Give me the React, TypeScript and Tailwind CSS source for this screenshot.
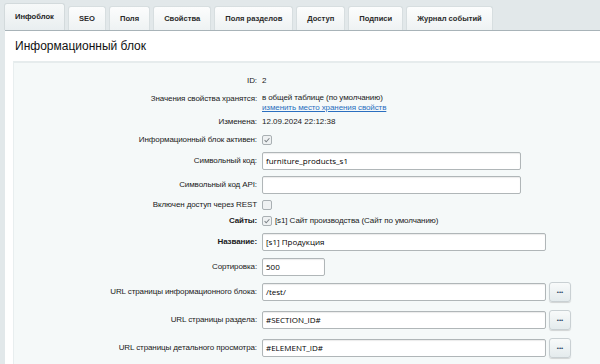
import type { ReactNode } from 'react'

const tabs = ['Инфоблок', 'SEO', 'Поля', 'Свойства', 'Поля разделов', 'Доступ', 'Подписи', 'Журнал событий']

function Label({ children, bold }: { children: ReactNode; bold?: boolean }) {
  return (
    <div className={`w-[248px] shrink-0 pr-[5px] text-right text-[8px] tracking-[-0.1px] text-[#1a1a1a] ${bold ? 'font-bold' : ''}`}>
      {children}
    </div>
  )
}

function TextInput({ value, w }: { value: string; w: string }) {
  return (
    <div className={`${w} h-[18px] flex items-center rounded-[2px] border border-[#b0b6b8] bg-white px-[3px] shadow-[inset_0_1px_1px_rgba(0,0,0,0.08)] font-['Open_Sans',sans-serif] text-[8px] text-black`}>
      {value}
    </div>
  )
}

function Check({ checked }: { checked?: boolean }) {
  return (
    <span className="inline-flex h-[10px] w-[10px] shrink-0 items-center justify-center rounded-[2px] border border-[#a9b0b3] bg-[#eef1f2]">
      {checked && (
        <svg viewBox="0 0 10 10" className="h-[8px] w-[8px]">
          <path d="M2 5.2 L4 7.2 L8 2.8" fill="none" stroke="#7b8185" strokeWidth="1.3" />
        </svg>
      )}
    </span>
  )
}

function DotsButton() {
  return (
    <div className="ml-[3px] flex h-[20px] w-[22px] items-center justify-center rounded-[3px] border border-[#c9d0d3] bg-gradient-to-b from-[#f8fafa] to-[#e4ebed] shadow-[0_1px_1px_rgba(0,0,0,0.15)] text-[6px] font-bold leading-none text-[#2c4a66]">
      •••
    </div>
  )
}

export default function App() {
  return (
    <div className="h-[364px] w-[600px] overflow-hidden bg-[#e2e8ea] font-['Liberation_Sans',Arial,sans-serif]">
      <div className="flex h-[30px] items-end gap-[3px] pl-[4px]">
        {tabs.map((t, i) => (
          <div
            key={t}
            className={
              i === 0
                ? 'flex h-[27px] items-center rounded-t-[3px] border border-b-0 border-[#d3dadc] bg-gradient-to-b from-[#f7f9f9] to-[#e9eef0] px-[10px] text-[7.6px] font-bold text-[#1e1e1e]'
                : 'flex h-[24px] items-center rounded-t-[3px] border border-b-0 border-[#d7dee0] bg-gradient-to-b from-[#fcfdfd] to-[#eef2f3] px-[10px] text-[7.6px] font-bold text-[#2b2b2b]'
            }
          >
            {t}
          </div>
        ))}
      </div>
      <div className="ml-[5px] h-full border-t border-[#a8b3b8] bg-white">
        <div className="flex h-[30px] items-center px-[10px] text-[12px] text-[#111]">Информационный блок</div>
        <div className="ml-[8px] h-full border-l border-t-[2px] border-[#e6eced] border-l-[#e8eeef] bg-[#f5f9f9] pt-[10px]">
          <div className="flex h-[16px] items-center">
            <Label>ID:</Label>
            <div className="text-[8px] text-[#1a1a1a]">2</div>
          </div>
          <div className="mt-[4px] flex h-[19px] items-start">
            <Label>Значения свойства хранятся:</Label>
            <div className="text-[8px] leading-[9.5px] tracking-[-0.1px] text-[#1a1a1a]">
              <div>в общей таблице (по умолчанию)</div>
              <div className="text-[#2a6fc0] underline">изменить место хранения свойств</div>
            </div>
          </div>
          <div className="mt-[2px] flex h-[16px] items-center">
            <Label>Изменена:</Label>
            <div className="text-[8px] text-[#1a1a1a]">12.09.2024 22:12:38</div>
          </div>
          <div className="mt-[2px] flex h-[16px] items-center">
            <Label>Информационный блок активен:</Label>
            <Check checked />
          </div>
          <div className="mt-[4px] flex h-[18px] items-center">
            <Label>Символьный код:</Label>
            <TextInput value="furniture_products_s1" w="w-[259px]" />
          </div>
          <div className="mt-[6px] flex h-[18px] items-center">
            <Label>Символьный код API:</Label>
            <TextInput value="" w="w-[259px]" />
          </div>
          <div className="mt-[4px] flex h-[14px] items-center">
            <Label>Включен доступ через REST</Label>
            <Check />
          </div>
          <div className="mt-[2px] flex h-[14px] items-center">
            <Label bold>Сайты:</Label>
            <Check checked />
            <span className="ml-[3px] text-[8px] tracking-[-0.1px] text-[#1a1a1a]">[s1] Сайт производства (Сайт по умолчанию)</span>
          </div>
          <div className="mt-[5px] flex h-[18px] items-center">
            <Label bold>Название:</Label>
            <TextInput value="[s1] Продукция" w="w-[284px]" />
          </div>
          <div className="mt-[7px] flex h-[18px] items-center">
            <Label>Сортировка:</Label>
            <TextInput value="500" w="w-[63px]" />
          </div>
          <div className="mt-[6px] flex h-[20px] items-center">
            <Label>URL страницы информационного блока:</Label>
            <TextInput value="/test/" w="w-[284px]" />
            <DotsButton />
          </div>
          <div className="mt-[8px] flex h-[20px] items-center">
            <Label>URL страницы раздела:</Label>
            <TextInput value="#SECTION_ID#" w="w-[284px]" />
            <DotsButton />
          </div>
          <div className="mt-[8px] flex h-[20px] items-center">
            <Label>URL страницы детального просмотра:</Label>
            <TextInput value="#ELEMENT_ID#" w="w-[284px]" />
            <DotsButton />
          </div>
        </div>
      </div>
    </div>
  )
}
